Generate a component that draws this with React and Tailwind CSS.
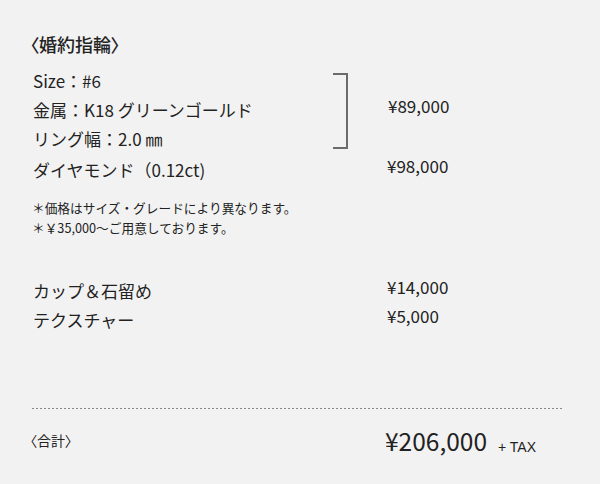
import React from "react";

const font = { fontFamily: '"Noto Sans CJK JP", "Noto Sans", sans-serif' };

const Row = ({ label, price }) => (
  <div className="flex items-start h-[29px]">
    <div className="w-[357px] pl-[3px] pt-[4px] leading-[29px] whitespace-nowrap">{label}</div>
    <div className="leading-[29px]">{price}</div>
  </div>
);

export default function App() {
  return (
    <div
      className="w-[600px] h-[484px] bg-[#f2f2f2] text-[#222] pl-[30px] pt-[31px]"
      style={font}
    >
      <h2 className="text-[18px] leading-[26px] font-medium [font-feature-settings:'palt']">
        〈婚約指輪〉
      </h2>

      <div className="mt-[9px] flex items-start text-[17px]">
        <div className="w-[303px] pl-[3px] whitespace-nowrap">
          <p className="leading-[29px]">Size：#6</p>
          <p className="leading-[29px]">金属：K18 グリーンゴールド</p>
          <p className="leading-[29px]">リング幅：2.0 ㎜</p>
        </div>
        <div className="mt-[7px] w-[15px] h-[76px] border-t-2 border-r-2 border-b-2 border-[#6b6b6b]"></div>
        <div className="ml-[40px] mt-[25px] leading-[29px]">¥89,000</div>
      </div>

      <div className="-mt-[2px] text-[17px]">
        <Row label="ダイヤモンド（0.12ct)" price="¥98,000" />
      </div>

      <div className="mt-[18px] text-[12.7px] leading-[20px] pl-[2px]">
        <p>＊価格はサイズ・グレードにより異なります。</p>
        <p>＊￥35,000〜ご用意しております。</p>
      </div>

      <div className="mt-[34px] text-[17px]">
        <Row label="カップ＆石留め" price="¥14,000" />
        <Row label="テクスチャー" price="¥5,000" />
      </div>

      <div className="mt-[78px] ml-[2px] w-[530px] h-px bg-[linear-gradient(to_right,#8a8a8a_50%,transparent_50%)] bg-[length:4px_1px]"></div>

      <div className="mt-[16px] flex items-start">
        <div className="w-[355px] mt-[5px] text-[14px] leading-[20px] [font-feature-settings:'palt']">〈合計〉</div>
        <div className="text-[24.5px] leading-[32px]">¥206,000</div>
        <div
          className="ml-[11px] mt-[12px] text-[14px] leading-[20px]"
          style={{ fontFamily: '"Liberation Sans", Arial, sans-serif' }}
        >
          + TAX
        </div>
      </div>
    </div>
  );
}
